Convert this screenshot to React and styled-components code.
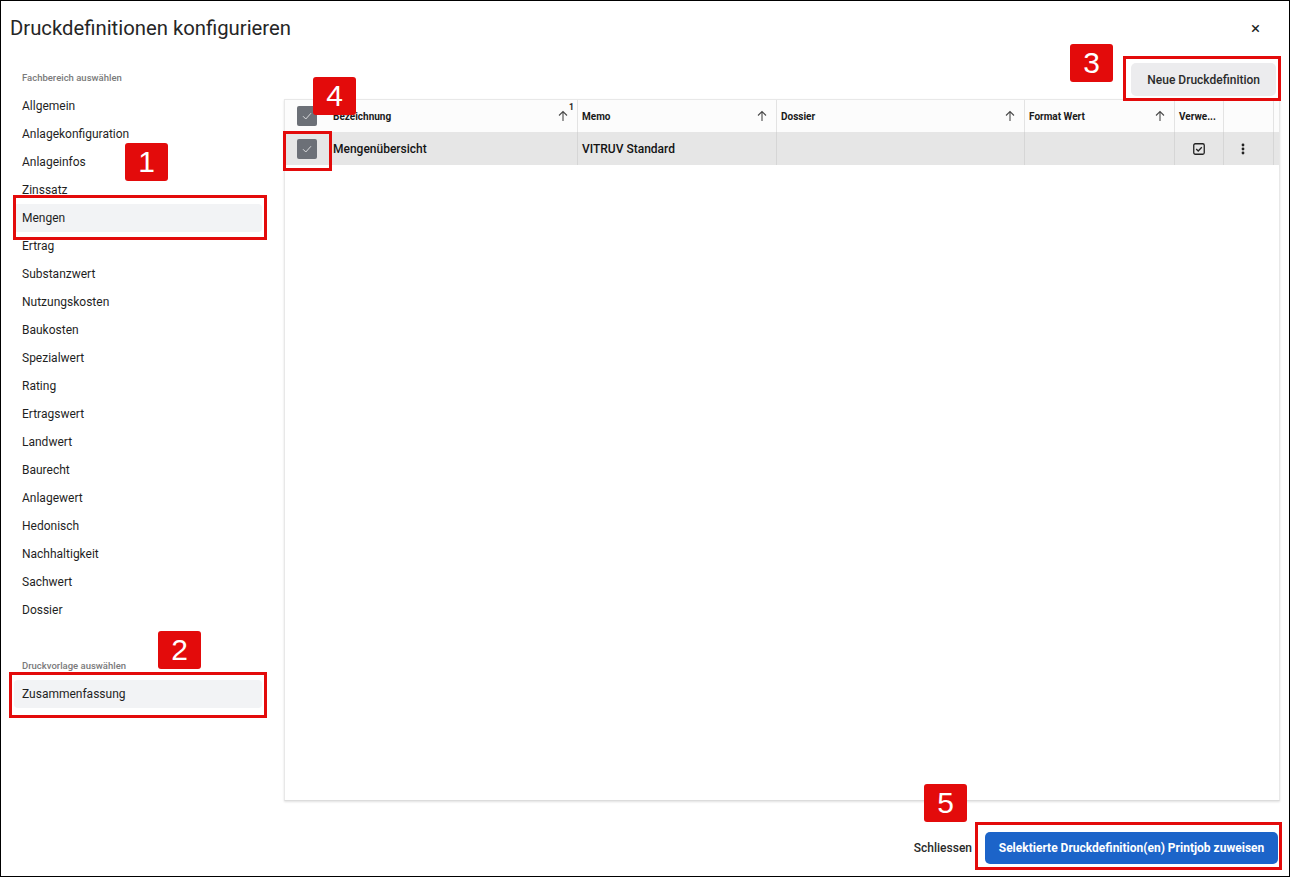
import React from "react";
import styled, { createGlobalStyle } from "styled-components";

const Global = createGlobalStyle`
  html, body { margin: 0; padding: 0; background: #fff; }
  body { font-family: Roboto, "Noto Sans", Arial, sans-serif; color: #222; }
  * { box-sizing: border-box; }
`;

const Dialog = styled.div`
  position: relative;
  width: 1290px;
  height: 877px;
  border: 1px solid #000;
  display: flex;
  flex-direction: column;
  background: #fff;
  overflow: hidden;
`;

const Header = styled.header`
  height: 56px;
  flex: none;
  display: flex;
  align-items: center;
  justify-content: space-between;
  padding: 0 29px 0 9px;
`;

const Title = styled.h1`
  margin: 0;
  margin-top: -2px;
  font-size: 20.3px;
  font-weight: 400;
  color: #262626;
`;

const CloseBtn = styled.button`
  border: none;
  background: none;
  padding: 0;
  margin-top: -2px;
  font-family: Roboto, Arial, sans-serif;
  font-size: 17px;
  line-height: 1;
  color: #222;
  cursor: pointer;
`;

const Body = styled.div`
  flex: 1;
  display: flex;
  min-height: 0;
`;

const Sidebar = styled.nav`
  width: 283px;
  flex: none;
  padding: 14px 22px 0 13px;
  display: flex;
  flex-direction: column;
`;

const SectionLabel = styled.div`
  font-size: 9.5px;
  font-weight: 500;
  color: #7a7a7a;
  line-height: 14px;
  padding-left: 8px;
  margin-top: ${(p) => (p.$first ? "0" : "35px")};
  margin-bottom: 7px;
`;

const NavItem = styled.div`
  height: 28px;
  display: flex;
  align-items: center;
  padding-left: 8px;
  font-size: 12px;
  color: #1f1f1f;
  border-radius: 4px;
  background: ${(p) => (p.$active ? "#f2f3f5" : "transparent")};
`;

const Content = styled.main`
  flex: 1;
  display: flex;
  flex-direction: column;
  padding-right: 9px;
  min-width: 0;
`;

const Toolbar = styled.div`
  display: flex;
  justify-content: flex-end;
  padding: 6px 4px 3px 0;
`;

const GreyButton = styled.button`
  height: 33px;
  padding: 0 16px;
  border: none;
  border-radius: 5px;
  background: #ececee;
  font-family: Roboto, Arial, sans-serif;
  font-size: 12px;
  font-weight: 500;
  color: #2b2b2b;
`;

const TableBox = styled.div`
  flex: 1;
  border: 1px solid #e8e8e8;
  border-bottom: 1px solid #dcdcdc;
  box-shadow: 0 1px 2px rgba(0, 0, 0, 0.12);
  display: flex;
  flex-direction: column;
`;

const cols = "44px 249px 199px 248px 150px 49px 50px 1fr";

const HeadRow = styled.div`
  display: grid;
  grid-template-columns: ${cols};
  height: 32px;
  background: #fcfcfc;
`;

const DataRow = styled.div`
  display: grid;
  grid-template-columns: ${cols};
  height: 33px;
  background: #e6e6e6;
`;

const HeadCell = styled.div`
  display: flex;
  align-items: center;
  justify-content: ${(p) => (p.$center ? "center" : "space-between")};
  padding: 0 ${(p) => (p.$center ? "0" : "8px")} 0 ${(p) => (p.$center ? "0" : "4px")};
  border-right: ${(p) => (p.$noBorder ? "none" : "1px solid #e3e3e3")};
  font-size: 10px;
  font-weight: 700;
  color: #1a1a1a;
  white-space: nowrap;
  overflow: hidden;
`;

const Cell = styled.div`
  display: flex;
  align-items: center;
  justify-content: ${(p) => (p.$center ? "center" : "flex-start")};
  padding-left: ${(p) => (p.$center ? "0" : p.$pad || "4px")};
  border-right: ${(p) => (p.$noBorder ? "none" : "1px solid #d6d6d6")};
  font-size: 12px;
  font-weight: 500;
  color: #141414;
  white-space: nowrap;
`;

const SortWrap = styled.span`
  position: relative;
  display: inline-flex;
  color: #555;
`;

const SortIndex = styled.sup`
  position: absolute;
  top: -8px;
  right: -5px;
  font-size: 8.5px;
  font-weight: 700;
  color: #222;
`;

const Box = styled.span`
  width: 20px;
  height: 20px;
  border-radius: 2px;
  background: #6c7077;
  display: inline-flex;
  align-items: center;
  justify-content: center;
`;

const Footer = styled.footer`
  flex: none;
  height: 75px;
  display: flex;
  align-items: flex-start;
  justify-content: flex-end;
  gap: 13px;
  padding-top: 31px;
  padding-right: 2px;
`;

const TextButton = styled.button`
  height: 32px;
  border: none;
  background: none;
  padding: 0;
  font-family: Roboto, Arial, sans-serif;
  font-size: 12px;
  font-weight: 500;
  color: #2a2a2a;
`;

const PrimaryButton = styled.button`
  height: 32px;
  width: 293px;
  border: none;
  border-radius: 5px;
  background: #1c64c9;
  font-family: Roboto, Arial, sans-serif;
  font-size: 12px;
  font-weight: 700;
  color: #fff;
`;

/* Annotation overlays */
const Badge = styled.div`
  position: absolute;
  left: ${(p) => p.$x}px;
  top: ${(p) => p.$y}px;
  width: 43px;
  height: 38px;
  border-radius: 3px;
  background: #e30b0b;
  color: #fff;
  font-family: "Liberation Sans", Arial, sans-serif;
  font-size: 30px;
  line-height: 38px;
  text-align: center;
  z-index: 3;
`;

const Frame = styled.div`
  position: absolute;
  left: ${(p) => p.$x}px;
  top: ${(p) => p.$y}px;
  width: ${(p) => p.$w}px;
  height: ${(p) => p.$h}px;
  border: 3px solid #e30b0b;
  z-index: 2;
  pointer-events: none;
`;

const Check = () => (
  <Box>
    <svg width="14" height="14" viewBox="0 0 14 14">
      <path d="M3 7.2 L5.8 10 L11 4.2" fill="none" stroke="#d9dadc" strokeWidth="1" />
    </svg>
  </Box>
);

const SortIcon = ({ index }) => (
  <SortWrap>
    <svg width="12" height="12" viewBox="0 0 12 12">
      <path d="M6 11 V1.5 M2 5.5 L6 1.5 L10 5.5" fill="none" stroke="#4a4a4a" strokeWidth="1.1" />
    </svg>
    {index && <SortIndex>{index}</SortIndex>}
  </SortWrap>
);

const SmallChecked = () => (
  <svg width="12" height="12" viewBox="0 0 12 12">
    <rect x="0.75" y="0.75" width="10.5" height="10.5" rx="1.5" fill="none" stroke="#222" strokeWidth="1.3" />
    <path d="M3.2 6 L5.2 8 L8.8 4.2" fill="none" stroke="#222" strokeWidth="1.3" />
  </svg>
);

const Kebab = () => (
  <svg width="4" height="12" viewBox="0 0 4 12">
    <circle cx="2" cy="2" r="1.4" fill="#222" />
    <circle cx="2" cy="6" r="1.4" fill="#222" />
    <circle cx="2" cy="10" r="1.4" fill="#222" />
  </svg>
);

const items = [
  "Allgemein", "Anlagekonfiguration", "Anlageinfos", "Zinssatz", "Mengen", "Ertrag",
  "Substanzwert", "Nutzungskosten", "Baukosten", "Spezialwert", "Rating", "Ertragswert",
  "Landwert", "Baurecht", "Anlagewert", "Hedonisch", "Nachhaltigkeit", "Sachwert", "Dossier",
];

const annotations = [
  { n: 1, badge: [124, 142], frame: [12, 194, 254, 45] },
  { n: 2, badge: [157, 630], frame: [8, 671, 258, 46] },
  { n: 3, badge: [1069, 43], frame: [1122, 55, 158, 45] },
  { n: 4, badge: [312, 76], frame: [282, 130, 49, 40] },
  { n: 5, badge: [923, 783], frame: [974, 821, 307, 48] },
];

export default function App() {
  return (
    <>
      <Global />
      <Dialog>
        <Header>
          <Title>Druckdefinitionen konfigurieren</Title>
          <CloseBtn aria-label="close">×</CloseBtn>
        </Header>
        <Body>
          <Sidebar>
            <SectionLabel $first>Fachbereich auswählen</SectionLabel>
            {items.map((it) => (
              <NavItem key={it} $active={it === "Mengen"}>{it}</NavItem>
            ))}
            <SectionLabel>Druckvorlage auswählen</SectionLabel>
            <NavItem $active>Zusammenfassung</NavItem>
          </Sidebar>
          <Content>
            <Toolbar>
              <GreyButton>Neue Druckdefinition</GreyButton>
            </Toolbar>
            <TableBox>
              <HeadRow>
                <HeadCell $center $noBorder><Check /></HeadCell>
                <HeadCell>Bezeichnung<SortIcon index="1" /></HeadCell>
                <HeadCell>Memo<SortIcon /></HeadCell>
                <HeadCell>Dossier<SortIcon /></HeadCell>
                <HeadCell>Format Wert<SortIcon /></HeadCell>
                <HeadCell>Verwe...</HeadCell>
                <HeadCell />
                <HeadCell $noBorder />
              </HeadRow>
              <DataRow>
                <Cell $center $noBorder><Check /></Cell>
                <Cell>Mengenübersicht</Cell>
                <Cell>VITRUV Standard</Cell>
                <Cell />
                <Cell />
                <Cell $center><SmallChecked /></Cell>
                <Cell $pad="17px"><Kebab /></Cell>
                <Cell $noBorder />
              </DataRow>
            </TableBox>
            <Footer>
              <TextButton>Schliessen</TextButton>
              <PrimaryButton>Selektierte Druckdefinition(en) Printjob zuweisen</PrimaryButton>
            </Footer>
          </Content>
        </Body>
        {annotations.map((a) => (
          <React.Fragment key={a.n}>
            <Frame $x={a.frame[0]} $y={a.frame[1]} $w={a.frame[2]} $h={a.frame[3]} />
            <Badge $x={a.badge[0]} $y={a.badge[1]}>{a.n}</Badge>
          </React.Fragment>
        ))}
      </Dialog>
    </>
  );
}
